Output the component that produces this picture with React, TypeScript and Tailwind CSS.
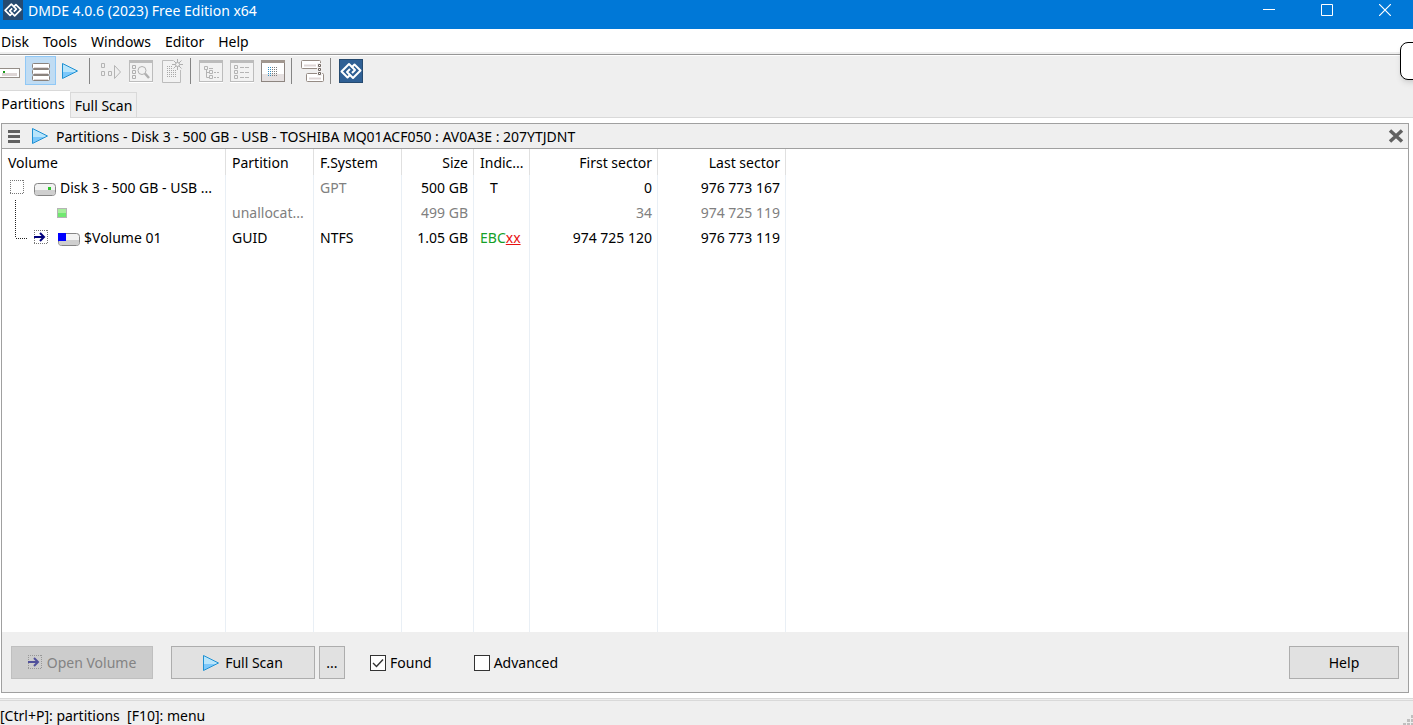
import { useState } from "react";
import type { ReactNode } from "react";
import { clsx } from "clsx";

type TabId = "partitions" | "scan";

type PartitionRow = {
  id: string;
  art: ReactNode;
  volume: string;
  partition: string;
  fileSystem: string;
  size: string;
  indicators: ReactNode;
  first: string;
  last: string;
  muted?: boolean;
  mutedFs?: boolean;
};

const menuItems = ["Disk", "Tools", "Windows", "Editor", "Help"];

function LogoStrokes() {
  return (
    <g fill="none" stroke="white" strokeWidth="2" strokeLinejoin="round">
      <path d="M11.500 15.500 8.500 18.500 2.500 12.500 10 5 16 11 13 14" />
      <path d="M12.500 8.500 15.500 5.500 21.500 11.500 14 19 8 13 11 10" />
    </g>
  );
}

function PlayIcon({ className }: { className?: string }) {
  return (
    <svg viewBox="0 0 16 16" width="16" height="16" className={className} aria-hidden="true">
      <path d="M.5.5v15l15-7.5z" fill="#b9e5fb" />
      <path d="M1 9h12L1 15z" fill="#7cc8fb" />
      <path d="M.5.5v15l15-7.5z" fill="none" stroke="#1e90d2" />
    </svg>
  );
}

function Drive({ x, y, led }: { x: number; y: number; led?: boolean }) {
  return (
    <g transform={`translate(${x} ${y})`}>
      <rect x=".5" y=".5" width="21" height="12" rx="3" fill="#f2f2f2" stroke="#858585" />
      <path d="M1 7h20v3a2 2 0 0 1-2 2H3a2 2 0 0 1-2-2z" fill="#cfcfcf" />
      {led ? (
        <rect x="14" y="4" width="3" height="3" fill="#2fc52f" />
      ) : (
        <rect x="0" y="0" width="8" height="8" fill="#0000ff" />
      )}
    </g>
  );
}

function DottedBox({ x, y }: { x: number; y: number }) {
  return (
    <path
      transform={`translate(${x} ${y})`}
      d="M0 .5h14M0 13.500h14M.5 0v14M13.500 0v14"
      fill="none"
      stroke="#777"
      strokeDasharray="1 1"
    />
  );
}

function ArrowBox({ x, y }: { x: number; y: number }) {
  return (
    <>
      <DottedBox x={x} y={y} />
      <path
        transform={`translate(${x} ${y})`}
        d="M0 7h10M6 3l4 4-4 4"
        fill="none"
        stroke="#00007c"
        strokeWidth="2"
      />
    </>
  );
}

function ToolFrame({ children }: { children: ReactNode }) {
  return (
    <>
      <rect x="4.500" y="4.500" width="23" height="21" fill="#f2f2f2" stroke="#bcbcbc" />
      <path d="M4 5.500h24" stroke="#bcbcbc" strokeWidth="3" />
      <path d="M4 26.500h24" stroke="#fff" />
      {children}
    </>
  );
}

function ToolButton({
  label,
  active,
  disabled,
  children,
}: {
  label: string;
  active?: boolean;
  disabled?: boolean;
  children: ReactNode;
}) {
  return (
    <button
      type="button"
      aria-label={label}
      disabled={disabled}
      className={clsx(
        "h-[29px] w-[31px] shrink-0",
        active && "bg-[#c0dcf3] outline outline-1 -outline-offset-1 outline-[#90c8f6]"
      )}
    >
      <svg viewBox="0 0 31 29" width="31" height="29">
        {children}
      </svg>
    </button>
  );
}

function Separator() {
  return <span className="mr-1 ml-[3px] h-[26px] w-px shrink-0 bg-[#858585]" />;
}

function Toolbar() {
  return (
    <div role="toolbar" className="flex items-center overflow-hidden pb-1">
      <button type="button" aria-label="Select disk" className="h-[29px] w-[25px] shrink-0">
        <svg viewBox="0 0 25 29" width="25" height="29">
          <rect x="-2.500" y="12.500" width="22" height="9" fill="#fff" stroke="#958e88" />
          <path d="M2 17h15v3H2z" fill="#ddd5d5" />
          <path d="M3 15h2v2H3z" fill="#199a19" />
        </svg>
      </button>
      <ToolButton label="Partitions" active>
        {[7, 13, 19].map((y) => (
          <g key={y}>
            <rect x="7.500" y={y + 0.5} width="17" height="5" rx="1" fill="#fff" stroke="#8a827c" />
            <path d={`M9 ${y + 4.5}h14`} stroke="#ddd6d6" />
          </g>
        ))}
      </ToolButton>
      <button type="button" aria-label="Full scan" className="h-[29px] w-[30px] shrink-0 pl-[6px]">
        <PlayIcon />
      </button>
      <Separator />
      <ToolButton label="Continue" disabled>
        <g fill="none" stroke="#b4b4b4">
          <path d="M7.500 7.500h3v4h-3zM7.500 15.500h3v4h-3zM14.500 15.500h3v4h-3z" />
          <path d="M20.500 9.500v13l6-6.500z" />
        </g>
      </ToolButton>
      <ToolButton label="Search" disabled>
        <ToolFrame>
          <g fill="none" stroke="#b0b0b0">
            <path d="M7.500 9.500h3v3h-3zM7.500 14.500h3v3h-3zM7.500 19.500h3v3h-3z" />
            <circle cx="17" cy="14.500" r="4" />
            <path d="m20 17.500 4 4.500" strokeWidth="2.500" />
          </g>
        </ToolFrame>
      </ToolButton>
      <ToolButton label="New" disabled>
        <path d="M17 4.500H6.500v22h18V14" fill="#f2f2f2" stroke="#bcbcbc" />
        <path
          d="M11 10.500h6M11 12.500h6M11 14.500h10M11 16.500h10M11 18.500h10M11 20.500h10"
          stroke="#a8a8a8"
          strokeDasharray="1 1"
        />
        <g stroke="#b0b0b0" fill="none">
          <path d="M21.500 3v11M16 8.500h11M17.500 4.500l8 8M25.500 4.500l-8 8" />
          <circle cx="21.500" cy="8.500" r="2" fill="#f2f2f2" />
        </g>
      </ToolButton>
      <Separator />
      <ToolButton label="Tree" disabled>
        <ToolFrame>
          <g fill="none" stroke="#b4b4b4">
            <path d="M9.500 10.500h3v3h-3zM14.500 14.500h3v3h-3zM14.500 19.500h3v3h-3z" />
            <path d="M11.500 14v7.500h3M11.500 16.500h3M14 12.500h4M19 16.500h2M22 16.500h2M19 21.500h2M22 21.500h2" />
          </g>
        </ToolFrame>
      </ToolButton>
      <ToolButton label="List" disabled>
        <ToolFrame>
          <g fill="none" stroke="#b4b4b4">
            <path d="M8.500 9.500h3v3h-3zM8.500 14.500h3v3h-3zM8.500 19.500h3v3h-3z" />
            <path d="M14 11.500h4M19 11.500h4M14 16.500h4M19 16.500h4M14 21.500h4M19 21.500h4" />
          </g>
        </ToolFrame>
      </ToolButton>
      <ToolButton label="Hex editor">
        <rect x="4.500" y="4.500" width="23" height="21" fill="#fff" stroke="#8d8580" />
        <path d="M5 18h22v7H5z" fill="#e6e1e1" />
        <path d="M4 5.500h24" stroke="#a1978f" strokeWidth="3" />
        <path
          d="M11 11.500h3M11 13.500h3M11 15.500h3M11 17.500h3M11 19.500h3"
          stroke="#2f8fc4"
          strokeDasharray="1 1"
        />
        <path
          d="M15 11.500h6M15 13.500h6M15 15.500h6M15 17.500h6M15 19.500h6"
          stroke="#7b7b7b"
          strokeDasharray="1 1"
        />
      </ToolButton>
      <Separator />
      <ToolButton label="Cluster map">
        <g stroke="#958b84">
          <rect x="5.500" y="4.500" width="19" height="8" rx="1" fill="#fff" />
          <path d="M8 9.500h12" stroke="#ded6d6" strokeWidth="2" />
          <rect x="10.500" y="17.500" width="17" height="8" rx="1" fill="#fff" />
          <path d="M13 22.500h12" stroke="#ded6d6" strokeWidth="2" />
          <path d="M21 7h5v13h-5z" fill="#f4f2f2" stroke="none" />
          <path d="M22.500 8.500h2v2h-2zM22.500 12.500h2v2h-2zM22.500 16.500h2v2h-2z" fill="#fff" stroke="#6e6660" />
        </g>
      </ToolButton>
      <Separator />
      <ToolButton label="About">
        <rect x="4.500" y="3.500" width="23" height="23" fill="#2f6095" stroke="#254a70" />
        <g transform="translate(4 3)">
          <LogoStrokes />
        </g>
      </ToolButton>
    </div>
  );
}

const rows: PartitionRow[] = [
  {
    id: "disk",
    art: (
      <svg width="58" height="25" className="shrink-0">
        <DottedBox x={8} y={5} />
        <Drive x={32} y={8} led />
      </svg>
    ),
    volume: "Disk 3 - 500 GB - USB ...",
    partition: "",
    fileSystem: "GPT",
    size: "500 GB",
    indicators: <span className="pl-[10px]">T</span>,
    first: "0",
    last: "976 773 167",
    mutedFs: true,
  },
  {
    id: "free",
    art: (
      <svg width="82" height="25" className="shrink-0">
        <path d="M13.500 0v25" stroke="#222" strokeDasharray="1 1" />
        <rect x="55.500" y="8.500" width="9" height="9" fill="#a6ee9c" stroke="#b4b4b4" />
        <path d="M56 13h8v4h-8z" fill="#70e870" />
      </svg>
    ),
    volume: "",
    partition: "unallocat...",
    fileSystem: "",
    size: "499 GB",
    indicators: "",
    first: "34",
    last: "974 725 119",
    muted: true,
  },
  {
    id: "volume-01",
    art: (
      <svg width="82" height="25" className="shrink-0">
        <path d="M13.500 1v12M14 13.500h11" fill="none" stroke="#222" strokeDasharray="1 1" />
        <ArrowBox x={32} y={5} />
        <Drive x={56} y={8} />
      </svg>
    ),
    volume: "$Volume 01",
    partition: "GUID",
    fileSystem: "NTFS",
    size: "1.05 GB",
    indicators: (
      <>
        <span className="text-[#14a028]">EBC</span>
        <span className="text-[#e81010] underline">xx</span>
      </>
    ),
    first: "974 725 120",
    last: "976 773 119",
  },
];

const columns = [
  { label: "Volume", right: false },
  { label: "Partition", right: false },
  { label: "F.System", right: false },
  { label: "Size", right: true },
  { label: "Indic...", right: false },
  { label: "First sector", right: true },
  { label: "Last sector", right: true },
];

const cell = "border-r border-[#e9eff5] p-0 pr-[5px] pl-[6px] whitespace-nowrap";

function PartitionTable() {
  return (
    <table className="h-full w-full table-fixed border-separate border-spacing-0 bg-white">
      <colgroup>
        <col className="w-[224px]" />
        <col className="w-[88px]" />
        <col className="w-[88px]" />
        <col className="w-[72px]" />
        <col className="w-[56px]" />
        <col className="w-[128px]" />
        <col className="w-[128px]" />
        <col />
      </colgroup>
      <thead>
        <tr className="h-[26px]">
          {columns.map((column) => (
            <th
              key={column.label}
              className={clsx(
                "border-r border-[#e0e0e0] p-0 pt-[2px] pr-[5px] pl-[6px] font-normal whitespace-nowrap",
                column.right ? "text-right" : "text-left"
              )}
            >
              {column.label}
            </th>
          ))}
          <td />
        </tr>
      </thead>
      <tbody>
        {rows.map((row) => (
          <tr key={row.id} className={clsx("h-[25px]", row.muted && "text-[#808080]")}>
            <td className="border-r border-[#e9eff5] p-0">
              <div className="flex h-[25px] items-center whitespace-nowrap">
                {row.art}
                {row.volume}
              </div>
            </td>
            <td className={cell}>{row.partition}</td>
            <td className={clsx(cell, row.mutedFs && "text-[#808080]")}>{row.fileSystem}</td>
            <td className={clsx(cell, "text-right")}>{row.size}</td>
            <td className={clsx(cell, "pr-0")}>{row.indicators}</td>
            <td className={clsx(cell, "text-right")}>{row.first}</td>
            <td className={clsx(cell, "text-right")}>{row.last}</td>
            <td />
          </tr>
        ))}
        <tr>
          {columns.map((column) => (
            <td key={column.label} className={cell} />
          ))}
          <td />
        </tr>
      </tbody>
    </table>
  );
}

function Check({
  id,
  label,
  checked,
  onChange,
}: {
  id: string;
  label: string;
  checked: boolean;
  onChange: (value: boolean) => void;
}) {
  return (
    <div className="flex items-center gap-1">
      <span className="relative h-4 w-4">
        <input
          id={id}
          type="checkbox"
          checked={checked}
          onChange={(e) => onChange(e.target.checked)}
          className="block h-4 w-4 appearance-none border border-[#333] bg-white"
        />
        {checked && (
          <svg viewBox="0 0 16 16" className="pointer-events-none absolute inset-0">
            <path d="m3 8 3.500 3.500L13 4.500" fill="none" stroke="#333" strokeWidth="1.400" />
          </svg>
        )}
      </span>
      <label htmlFor={id}>{label}</label>
    </div>
  );
}

const windowButton = "flex h-5 w-[58px] items-center justify-center";

const pushButton =
  "flex h-[33px] items-center justify-center border border-[#adadad] bg-[#e1e1e1] whitespace-nowrap";

export default function App() {
  const [tab, setTab] = useState<TabId>("partitions");
  const [found, setFound] = useState(true);
  const [advanced, setAdvanced] = useState(false);

  return (
    <div className="relative flex h-screen flex-col overflow-hidden bg-white font-['Noto_Sans','Open_Sans',sans-serif] text-[14px] leading-5 text-black">
      <header className="flex h-[29px] shrink-0 items-start justify-between bg-[#0078d7] text-white">
        <div className="flex items-start gap-[5px] pl-[3px]">
          <svg viewBox="0 0 24 24" className="h-5 w-5 bg-[#264a70]" aria-hidden="true">
            <LogoStrokes />
          </svg>
          <h1 className="pt-px">DMDE 4.0.6 (2023) Free Edition x64</h1>
        </div>
        <div className="-mr-px flex">
          <button type="button" aria-label="Minimize" className={windowButton}>
            <svg width="12" height="12">
              <path d="M0 5.500h12" stroke="#fff" />
            </svg>
          </button>
          <button type="button" aria-label="Maximize" className={windowButton}>
            <svg width="12" height="12">
              <path d="M.5.500h11v11H.5z" fill="none" stroke="#fff" />
            </svg>
          </button>
          <button type="button" aria-label="Close" className={windowButton}>
            <svg width="12" height="12">
              <path d="m0 0 12 12M12 0 0 12" stroke="#fff" strokeWidth="1.200" />
            </svg>
          </button>
        </div>
      </header>

      <nav className="flex h-[25px] shrink-0 items-center gap-[14px] border-b-2 border-[#efefef] pt-[2px] pl-px">
        {menuItems.map((item) => (
          <button key={item} type="button">
            {item}
          </button>
        ))}
      </nav>

      <div className="shrink-0 border-t border-[#969696] bg-[#efefef]">
        <div className="border-t border-white">
          <Toolbar />
        </div>
        <div role="tablist" className="flex h-[29px] items-end border-b border-[#d9d9d9]">
          <button
            type="button"
            role="tab"
            aria-selected={tab === "partitions"}
            onClick={() => setTab("partitions")}
            className="-mb-px h-7 w-[70px] border-t border-[#d9d9d9] bg-white pr-1 pb-[2px] text-center"
          >
            Partitions
          </button>
          <button
            type="button"
            role="tab"
            aria-selected={tab === "scan"}
            onClick={() => setTab("scan")}
            className="h-[25px] w-[67px] border border-b-0 border-[#d9d9d9] pt-px text-center"
          >
            Full Scan
          </button>
        </div>
      </div>

      <main className="mt-[5px] mr-1 mb-[5px] ml-px flex min-h-0 flex-1 flex-col border border-[#a0a0a0] bg-[#efefef]">
        <div className="flex h-[25px] shrink-0 items-center border-b border-[#a0a0a0] pr-1 pl-[6px]">
          <button type="button" aria-label="Panel menu">
            <svg width="12" height="13">
              <path d="M0 1.500h12M0 6.500h12M0 11.500h12" stroke="#606060" strokeWidth="3" />
            </svg>
          </button>
          <PlayIcon className="ml-3" />
          <h2 className="ml-2 pt-px whitespace-nowrap">
            Partitions - Disk 3 - 500 GB - USB - TOSHIBA MQ01ACF050 : AV0A3E : 207YTJDNT
          </h2>
          <button type="button" aria-label="Close panel" className="ml-auto">
            <svg width="16" height="14">
              <path d="m2 1.500 12 11M14 1.500l-12 11" stroke="#606060" strokeWidth="3.500" />
            </svg>
          </button>
        </div>

        <div className="min-h-0 flex-1">
          <PartitionTable />
        </div>

        <div className="flex shrink-0 items-center px-[9px] pt-[14px] pb-[13px]">
          <button
            type="button"
            disabled
            className="flex h-[33px] w-[142px] items-center justify-center gap-1 border border-[#bfbfbf] bg-[#cccccc] whitespace-nowrap text-[#838383]"
          >
            <svg width="15" height="15" className="opacity-60">
              <ArrowBox x={0} y={0} />
            </svg>
            Open Volume
          </button>
          <button type="button" className={clsx(pushButton, "ml-[18px] w-36 gap-[6px]")}>
            <PlayIcon />
            Full Scan
          </button>
          <button type="button" className={clsx(pushButton, "ml-1 w-[26px]")}>
            ...
          </button>
          <div className="ml-[25px] flex gap-[42px]">
            <Check id="found" label="Found" checked={found} onChange={setFound} />
            <Check id="advanced" label="Advanced" checked={advanced} onChange={setAdvanced} />
          </div>
          <button type="button" className={clsx(pushButton, "ml-auto w-[110px]")}>
            Help
          </button>
        </div>
      </main>

      <footer className="h-[27px] shrink-0 border-t border-[#d9d9d9] bg-[#efefef] pt-px">
        <div className="flex h-full justify-between border-t border-[#d9d9d9]">
          <p className="pt-[5px] whitespace-pre">[Ctrl+P]: partitions  [F10]: menu</p>
          <svg width="10" height="10" className="self-end" shapeRendering="crispEdges">
            <path d="M8 0h3v3H8zM4 4h3v3H4zM8 4h3v3H8zM0 8h3v3H0zM4 8h3v3H4zM8 8h3v3H8z" fill="#bfbfbf" />
          </svg>
        </div>
      </footer>

      <button
        type="button"
        aria-label="Show side panel"
        className="absolute top-[42px] -right-5 h-[38px] w-[33px] rounded-lg border border-black bg-white shadow-md"
      />
    </div>
  );
}
